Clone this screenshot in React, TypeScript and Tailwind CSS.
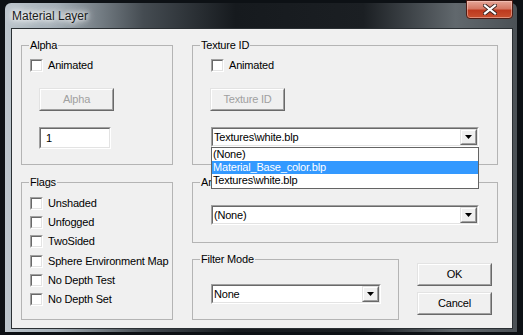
import { ReactNode } from "react";

function Check({ label }: { label: string }) {
  return (
    <div className="flex h-[13px] items-center gap-[5px]">
      <span className="box-border flex size-[13px] shrink-0 border border-b-white border-l-[#a0a0a0] border-r-white border-t-[#a0a0a0]">
        <span className="box-border block size-full border border-b-[#e3e3e3] border-l-[#696969] border-r-[#e3e3e3] border-t-[#696969] bg-white" />
      </span>
      <span className="whitespace-nowrap leading-[13px]">{label}</span>
    </div>
  );
}

function Btn({ children, disabled, className = "" }: { children: ReactNode; disabled?: boolean; className?: string }) {
  return (
    <div
      className={`box-border flex h-[23px] w-[75px] border border-b-[#696969] border-l-[#e3e3e3] border-r-[#696969] border-t-[#e3e3e3] ${className}`}
    >
      <div
        className={`box-border flex size-full items-center justify-center border border-b-[#a0a0a0] border-l-white border-r-[#a0a0a0] border-t-white bg-[#f0f0f0] ${disabled ? "text-[#a0a0a0]" : "text-black"}`}
      >
        {children}
      </div>
    </div>
  );
}

function Sunken({ className = "", children }: { className?: string; children?: ReactNode }) {
  return (
    <div className={`box-border flex border border-b-white border-l-[#a0a0a0] border-r-white border-t-[#a0a0a0] ${className}`}>
      <div className="box-border flex size-full items-center border border-b-[#e3e3e3] border-l-[#696969] border-r-[#e3e3e3] border-t-[#696969] bg-white">
        {children}
      </div>
    </div>
  );
}

function Combo({ value, className = "" }: { value: string; className?: string }) {
  return (
    <Sunken className={`h-[20px] ${className}`}>
      <span className="flex-1 whitespace-nowrap pl-[1px] leading-[13px]">{value}</span>
      <div className="box-border flex h-full w-[17px] border border-b-[#696969] border-l-[#e3e3e3] border-r-[#696969] border-t-[#e3e3e3]">
        <div className="box-border flex size-full items-center justify-center border border-b-[#a0a0a0] border-l-white border-r-[#a0a0a0] border-t-white bg-[#f0f0f0]">
          <svg width="7" height="4" viewBox="0 0 7 4">
            <path d="M0 0h7L3.5 4z" fill="#000" />
          </svg>
        </div>
      </div>
    </Sunken>
  );
}

function Group({ title, className = "", children }: { title: string; className?: string; children?: ReactNode }) {
  return (
    <div className={`box-border flex flex-col border border-[#b4b4b4] ${className}`}>
      <span className="-mt-[7px] ml-[7px] w-fit whitespace-nowrap bg-[#f0f0f0] px-[1px] leading-[13px]">{title}</span>
      {children}
    </div>
  );
}

export default function App() {
  return (
    <div className="h-[335px] w-[523px] overflow-hidden bg-[#0d1115] pt-[3px] font-['Liberation_Sans',Arial,sans-serif] text-[11px] tracking-[-0.2px] text-black">
      <div className="relative ml-[5px] flex h-[329px] w-[512px] flex-col rounded-t-[6px] bg-[linear-gradient(90deg,#bcc5cc_0%,#a3aeb6_10%,#454c52_27%,#161a1e_45%,#1b1f23_70%,#61686d_88%,#4b5156_100%)]">
        {/* title bar */}
        <div className="flex h-[25px] items-center pl-[7px] text-[12px] tracking-normal text-[#1b1b1b] [text-shadow:0_0_9px_#fff,0_0_9px_#fff,0_0_4px_#fff]">
          Material Layer
        </div>

        {/* close button */}
        <div className="absolute right-[4px] top-[-3px] flex h-[19px] w-[47px] items-center justify-center rounded-b-[4px] border border-[#4d1d15] bg-[linear-gradient(180deg,#e6a698_0%,#d57864_45%,#bd3a1f_55%,#c8502f_100%)] shadow-[inset_0_0_0_1px_rgba(255,220,210,0.45)]">
          <svg width="14" height="11" viewBox="0 0 14 11">
            <path d="M2 1.5L12 9.5M12 1.5L2 9.5" stroke="#3b2420" strokeWidth="4" strokeLinecap="square" />
            <path d="M2 1.5L12 9.5M12 1.5L2 9.5" stroke="#fff" strokeWidth="2.2" strokeLinecap="square" />
          </svg>
        </div>

        {/* client area */}
        <div className="ml-[6px] box-border flex h-[301px] w-[502px] border border-[#2a2f33] bg-[#f0f0f0] pl-[9px] pt-[16px]">
          {/* left column */}
          <div className="flex w-[152px] flex-col">
            <Group title="Alpha" className="h-[120px]">
              <div className="mt-[7px] pl-[8px]">
                <Check label="Animated" />
              </div>
              <Btn disabled className="ml-[17px] mt-[16px]">
                Alpha
              </Btn>
              <Sunken className="ml-[17px] mt-[16px] h-[22px] w-[72px]">
                <span className="pl-[5px] leading-[13px]">1</span>
              </Sunken>
            </Group>

            <Group title="Flags" className="mt-[17px] h-[138px]">
              <div className="mt-[8px] flex flex-col gap-[6.2px] pl-[8px]">
                <Check label="Unshaded" />
                <Check label="Unfogged" />
                <Check label="TwoSided" />
                <Check label="Sphere Environment Map" />
                <Check label="No Depth Test" />
                <Check label="No Depth Set" />
              </div>
            </Group>
          </div>

          {/* right column */}
          <div className="ml-[19px] flex w-[306px] flex-col">
            <Group title="Texture ID" className="h-[120px]">
              <div className="mt-[7px] pl-[18px]">
                <Check label="Animated" />
              </div>
              <Btn disabled className="ml-[17px] mt-[16px]">
                Texture ID
              </Btn>
              <div className="relative ml-[18px] mt-[16px] w-[268px]">
                <Combo value={"Textures\\white.blp"} className="w-[268px]" />
                {/* open drop-down list */}
                <div className="absolute left-0 top-full z-10 box-border flex h-[42px] w-[268px] flex-col border border-[#646464] bg-white">
                  <span className="pl-[1px] leading-[13px]">(None)</span>
                  <span className="bg-[#3399ff] pl-[1px] leading-[13px] text-white">Material_Base_color.blp</span>
                  <span className="pl-[1px] leading-[13px]">{"Textures\\white.blp"}</span>
                </div>
              </div>
            </Group>

            <Group title="Animation ID" className="mt-[17px] h-[61px]">
              <Combo value="(None)" className="ml-[18px] mt-[16px] w-[268px]" />
            </Group>

            <div className="mt-[16px] flex items-start">
              <Group title="Filter Mode" className="h-[61px] w-[207px]">
                <Combo value="None" className="ml-[18px] mt-[18px] w-[170px]" />
              </Group>
              <div className="ml-[18px] mt-[4px] flex flex-col gap-[6px]">
                <Btn>OK</Btn>
                <Btn>Cancel</Btn>
              </div>
            </div>
          </div>
        </div>
      </div>
    </div>
  );
}
